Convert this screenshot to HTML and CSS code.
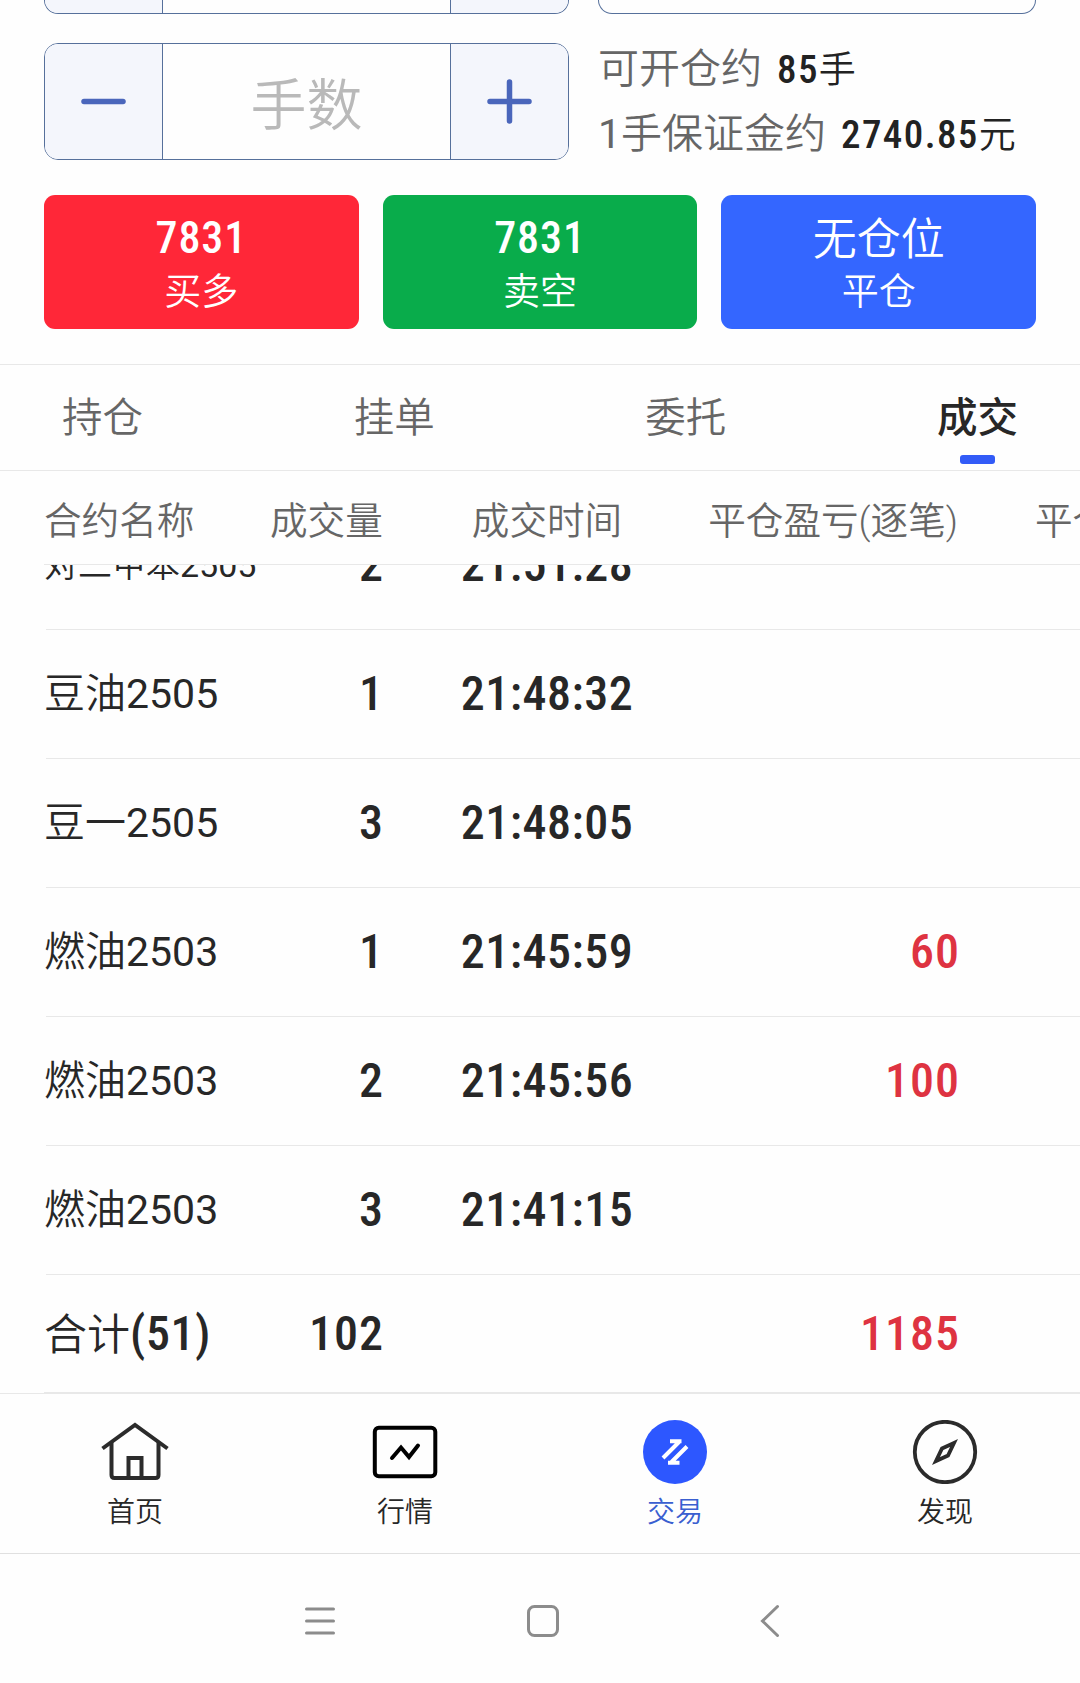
FILE: index.html
```html
<!DOCTYPE html>
<html lang="zh-CN">
<head>
  <meta charset="UTF-8">
  <title>交易</title>
  <link rel="stylesheet" href="styles.css">
</head>
<body>
  <div class="order">
    <div class="order-row">
      <div class="stepper cut">
        <div class="step"></div>
        <div class="field"></div>
        <div class="step"></div>
      </div>
      <div class="select cut"></div>
    </div>
    <div class="order-row second">
      <div class="stepper">
        <div class="step">
          <svg width="52" height="52" viewBox="0 0 52 52"><path d="M6 25.500h39"/></svg>
        </div>
        <div class="field">手数</div>
        <div class="step">
          <svg width="52" height="52" viewBox="0 0 52 52"><path d="M6 25.500h39M25.500 6v39"/></svg>
        </div>
      </div>
      <div class="info">
        <p>可开仓约<span class="value">85<i>手</i></span></p>
        <p><span class="num">1</span>手保证金约<span class="value">2740.85<i>元</i></span></p>
      </div>
    </div>
    <div class="buttons">
      <div class="btn buy"><b>7831</b><span>买多</span></div>
      <div class="btn sell"><b>7831</b><span>卖空</span></div>
      <div class="btn close"><b class="cn">无仓位</b><span>平仓</span></div>
    </div>
  </div>

  <div class="tabs">
    <div class="tab">持仓</div>
    <div class="tab">挂单</div>
    <div class="tab">委托</div>
    <div class="tab active">成交</div>
  </div>

  <div class="table-head">
    <div class="name">合约名称</div>
    <div class="volume">成交量</div>
    <div class="time">成交时间</div>
    <div class="profit">平仓盈亏(逐笔)</div>
    <div class="more">平仓盈亏(盯市)</div>
  </div>

  <div class="list">
    <div class="row">
      <div class="name long">对二甲苯<span class="num">2505</span></div>
      <div class="volume">2</div>
      <div class="time">21:51:28</div>
      <div class="profit"></div>
    </div>
    <div class="row">
      <div class="name">豆油<span class="num">2505</span></div>
      <div class="volume">1</div>
      <div class="time">21:48:32</div>
      <div class="profit"></div>
    </div>
    <div class="row">
      <div class="name">豆一<span class="num">2505</span></div>
      <div class="volume">3</div>
      <div class="time">21:48:05</div>
      <div class="profit"></div>
    </div>
    <div class="row">
      <div class="name">燃油<span class="num">2503</span></div>
      <div class="volume">1</div>
      <div class="time">21:45:59</div>
      <div class="profit">60</div>
    </div>
    <div class="row">
      <div class="name">燃油<span class="num">2503</span></div>
      <div class="volume">2</div>
      <div class="time">21:45:56</div>
      <div class="profit">100</div>
    </div>
    <div class="row">
      <div class="name">燃油<span class="num">2503</span></div>
      <div class="volume">3</div>
      <div class="time">21:41:15</div>
      <div class="profit"></div>
    </div>
  </div>

  <div class="total">
    <div class="name">合计<b>(51)</b></div>
    <div class="volume">102</div>
    <div class="time"></div>
    <div class="profit">1185</div>
  </div>

  <div class="nav">
    <div class="nav-item">
      <svg width="72" height="64" viewBox="0 0 72 64" fill="none" stroke="#2b2b2b" stroke-width="4">
        <path d="M3.500 28.500L36 5l32.500 23.500"/>
        <path d="M12.500 22.500V55q0 3 3 3h41q3 0 3-3V22.500"/>
        <path d="M29.500 58V38h13v20"/>
      </svg>
      <span>首页</span>
    </div>
    <div class="nav-item">
      <svg width="72" height="64" viewBox="0 0 72 64" fill="none" stroke="#000" stroke-width="4">
        <rect x="5.800" y="7.800" width="60.500" height="48.500" rx="4"/>
        <path d="M23 38l9-10.500 8 9.500 9-11.500" stroke-linecap="round"/>
      </svg>
      <span>行情</span>
    </div>
    <div class="nav-item active">
      <svg width="72" height="64" viewBox="0 0 72 64" fill="none" stroke="#fff" stroke-width="4">
        <circle cx="36" cy="32" r="32" fill="#2d57ff" stroke="none"/>
        <path d="M31 21.300h11.500M40 22L24 38"/>
        <path d="M48 26.500L32.500 42M29 42.700h11.500"/>
      </svg>
      <span>交易</span>
    </div>
    <div class="nav-item">
      <svg width="72" height="64" viewBox="0 0 72 64" fill="none" stroke="#2b2b2b" stroke-width="3.800">
        <circle cx="36" cy="32" r="30.200"/>
        <path d="M45 23L33 28.500 27 41l12-5.500z" stroke-miterlimit="10"/>
      </svg>
      <span>发现</span>
    </div>
  </div>

  <div class="system">
    <svg width="36" height="36" viewBox="0 0 36 36"><path d="M4.500 6h27M4.500 18h27M4.500 30h27"/></svg>
    <svg width="36" height="36" viewBox="0 0 36 36"><rect x="3.500" y="3.500" width="29" height="29" rx="6"/></svg>
    <svg width="36" height="36" viewBox="0 0 36 36"><path d="M29.500 3.500L14.500 18l15 14.500"/></svg>
  </div>
</body>
</html>
```

FILE: styles.css
```css
* {
  box-sizing: border-box;
}

body {
  margin: 0;
  width: 1080px;
  height: 1683px;
  overflow: hidden;
  background: #fefefe;
  color: #272727;
  font-family: Roboto, "Noto Sans CJK SC", sans-serif;
  font-weight: 350;
}

p {
  margin: 0;
}

.num {
  font-weight: 400;
}

/* order form */
.order {
  height: 364px;
  padding: 0 44px;
}

.order-row {
  display: flex;
  gap: 29px;
}

.order-row.second {
  height: 117px;
  margin-top: 29px;
}

.stepper {
  display: flex;
  width: 525px;
  height: 117px;
  border: 1px solid #56709b;
  border-radius: 14px;
  overflow: hidden;
}

.step {
  display: flex;
  align-items: center;
  justify-content: center;
  width: 117px;
  background: #f4f6fc;
}

.step svg {
  fill: none;
  stroke: #4a66bb;
  stroke-width: 5.5;
  stroke-linecap: round;
}

.field {
  flex: 1;
  padding-top: 4px;
  border-left: 1px solid #56709b;
  border-right: 1px solid #56709b;
  color: #b9b9b9;
  font-size: 56px;
  line-height: 117px;
  text-align: center;
}

.select {
  flex: 1;
  border: 1px solid #56709b;
  border-radius: 14px;
}

.stepper.cut,
.select.cut {
  height: 14px;
  border-top: 0;
  border-top-left-radius: 0;
  border-top-right-radius: 0;
}

.info {
  color: #666;
  font-size: 41px;
  line-height: 65px;
  white-space: nowrap;
}

.info p {
  height: 65px;
  margin-top: -6px;
  margin-bottom: 6px;
}

.value {
  margin-left: 15px;
  color: #222;
  font-size: 39px;
  font-weight: 500;
  font-stretch: 87%;
  letter-spacing: 1.4px;
}

.value i {
  font-size: 37px;
  font-style: normal;
  font-weight: 350;
}

.buttons {
  display: flex;
  gap: 24px;
  margin-top: 35px;
}

.btn {
  display: flex;
  flex: 1;
  flex-direction: column;
  align-items: center;
  height: 134px;
  padding-top: 16px;
  border-radius: 11px;
  color: #fff;
}

.btn b {
  height: 55px;
  font-size: 44px;
  font-weight: 500;
  font-stretch: 87%;
  line-height: 55px;
  letter-spacing: 0.9px;
}

.btn .cn {
  font-weight: 350;
  line-height: 58px;
  letter-spacing: 0;
}

.btn span {
  font-size: 37px;
  line-height: 54px;
}

.buy {
  background: #ff2738;
}

.sell {
  background: #09ac4b;
}

.close {
  background: #3466ff;
}

/* tabs */
.tabs {
  display: flex;
  justify-content: space-between;
  height: 107px;
  padding: 0 62px;
  border-top: 1px solid #e8e8e8;
  border-bottom: 1px solid #e8e8e8;
}

.tab {
  position: relative;
  color: #666;
  font-size: 40.5px;
  line-height: 107px;
}

.tab.active {
  color: #272727;
  font-weight: 500;
}

.tab.active::after {
  content: "";
  position: absolute;
  left: 50%;
  bottom: 6px;
  width: 35px;
  height: 9px;
  margin-left: -17px;
  border-radius: 3px;
  background: #325bf7;
}

/* trades table */
.table-head {
  display: flex;
  height: 94px;
  margin-left: 44px;
  border-bottom: 1px solid #e8e8e8;
  overflow: hidden;
  color: #666;
  font-size: 37.6px;
  line-height: 100px;
  white-space: nowrap;
}

.name {
  flex: none;
  width: 226px;
}

.volume {
  flex: none;
  width: 112px;
  text-align: right;
}

.time {
  flex: none;
  width: 330px;
  text-align: center;
}

.profit {
  flex: none;
  width: 246px;
  text-align: right;
}

.table-head .profit {
  width: 256px;
  margin-left: -10px;
}

.more {
  flex: none;
  margin-left: 77px;
}

.list {
  display: flex;
  flex-direction: column;
  justify-content: flex-end;
  height: 710px;
  overflow: hidden;
}

.row {
  display: flex;
  flex: none;
  height: 129px;
  margin-left: 46px;
  border-bottom: 1px solid #e8e8e8;
  line-height: 128px;
}

.row .name {
  margin-left: -2px;
  font-size: 41px;
  line-height: 129px;
}

.row .name.long {
  font-size: 34px;
}

.row .volume,
.row .time,
.row .profit,
.total .volume,
.total .profit,
.total b {
  font-size: 48px;
  font-weight: 500;
  font-stretch: 87%;
  letter-spacing: 1px;
}

.row .time {
  letter-spacing: 0.5px;
}

/* digits overhang the column a little, so the last one sits on its edge */
.row .volume,
.row .profit,
.total .volume,
.total .profit {
  margin-right: -2px;
  padding-left: 2px;
}

.row .volume,
.total .volume {
  width: 114px;
}

.row .profit,
.total .profit {
  width: 248px;
  color: #de3341;
}

.total {
  display: flex;
  height: 118px;
  margin-left: 44px;
  border-bottom: 1px solid #e8e8e8;
  line-height: 117px;
}

.total .name {
  font-size: 43px;
}

.total b {
  letter-spacing: 0.6px;
}

/* bottom navigation */
.nav {
  display: flex;
  height: 161px;
  border-top: 1px solid #e8e8e8;
  border-bottom: 1px solid #e0e0e0;
}

.nav-item {
  display: flex;
  flex: 1;
  flex-direction: column;
  align-items: center;
  padding-top: 26px;
  font-size: 28px;
}

.nav-item span {
  margin-top: 9px;
  line-height: 40px;
}

.nav-item.active {
  color: #3a5fd0;
}

.system {
  display: flex;
  justify-content: center;
  gap: 187px;
  padding: 49px 0 0 5px;
}

.system svg {
  fill: none;
  stroke: #8c8c8c;
  stroke-width: 3;
  stroke-linecap: round;
}
```
